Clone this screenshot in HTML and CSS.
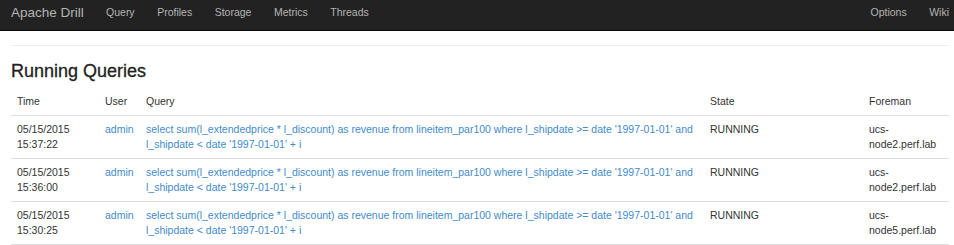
FILE: index.html
```html
<!DOCTYPE html>
<html lang="en">
<head>
    <meta charset="UTF-8">
    <meta name="viewport" content="width=device-width, initial-scale=1.0">
    <link rel="stylesheet" href="styles.css">
    <title>Apache Drill</title>
</head>
<body>
    <div class="navbar">
        <div class="nav-left">
            <a class="brand" href="#">Apache Drill</a>
            <a class="nav-link" href="#">Query</a>
            <a class="nav-link" href="#">Profiles</a>
            <a class="nav-link" href="#">Storage</a>
            <a class="nav-link" href="#">Metrics</a>
            <a class="nav-link" href="#">Threads</a>
        </div>
        <div class="nav-right">
            <a class="nav-link" href="#">Options</a>
            <a class="nav-link" href="#">Wiki</a>
        </div>
    </div>

    <div class="container">
        <hr>
        <h3>Running Queries</h3>
        <table class="table">
            <colgroup>
                <col class="col-time">
                <col class="col-user">
                <col class="col-query">
                <col class="col-state">
                <col class="col-foreman">
            </colgroup>
            <thead>
                <tr>
                    <th>Time</th>
                    <th>User</th>
                    <th>Query</th>
                    <th>State</th>
                    <th>Foreman</th>
                </tr>
            </thead>
            <tbody>
                <tr>
                    <td>05/15/2015 15:37:22</td>
                    <td><a href="#">admin</a></td>
                    <td><a href="#">select sum(l_extendedprice * l_discount) as revenue from lineitem_par100 where l_shipdate &gt;= date '1997-01-01' and l_shipdate &lt; date '1997-01-01' + i</a></td>
                    <td>RUNNING</td>
                    <td>ucs-node2.perf.lab</td>
                </tr>
                <tr>
                    <td>05/15/2015 15:36:00</td>
                    <td><a href="#">admin</a></td>
                    <td><a href="#">select sum(l_extendedprice * l_discount) as revenue from lineitem_par100 where l_shipdate &gt;= date '1997-01-01' and l_shipdate &lt; date '1997-01-01' + i</a></td>
                    <td>RUNNING</td>
                    <td>ucs-node2.perf.lab</td>
                </tr>
                <tr>
                    <td>05/15/2015 15:30:25</td>
                    <td><a href="#">admin</a></td>
                    <td><a href="#">select sum(l_extendedprice * l_discount) as revenue from lineitem_par100 where l_shipdate &gt;= date '1997-01-01' and l_shipdate &lt; date '1997-01-01' + i</a></td>
                    <td>RUNNING</td>
                    <td>ucs-node5.perf.lab</td>
                </tr>
            </tbody>
        </table>
    </div>
</body>
</html>
```

FILE: styles.css
```css
body {
    font-family: 'Liberation Sans', Arial, sans-serif;
    font-size: 10.5px;
    line-height: 15px;
    color: #333;
    margin: 0;
    background: #fff;
}

a {
    color: #428bca;
    text-decoration: none;
}

/* top bar */
.navbar {
    display: flex;
    justify-content: space-between;
    height: 30px;
    background-color: #222;
    border-bottom: 1px solid #080808;
}

.nav-left,
.nav-right {
    display: flex;
    align-items: flex-start;
}

.brand {
    color: #b4b4b4;
    font-size: 13.5px;
    line-height: 19px;
    padding: 3px 11px 0 11px;
}

.nav-link {
    color: #b4b4b4;
    padding: 5px 11.25px 0 11.25px;
}

.nav-right .nav-link:last-child {
    padding-right: 5px;
}

/* page */
.container {
    padding: 0 5px 0 11px;
}

hr {
    margin: 14px 0 0 0;
    border: 0;
    border-top: 1px solid #eee;
}

h3 {
    font-size: 18px;
    font-weight: normal;
    line-height: 1.1;
    color: #222;
    -webkit-text-stroke: 0.3px #222; /* medium weight like the original */
    margin: 16px 0 6px 0;
}

.table {
    width: 100%;
    table-layout: fixed;
    border-collapse: collapse;
    border-bottom: 1px solid #ddd;
}

.col-time { width: 88px; }
.col-user { width: 41px; }
.col-query { width: 564px; }
.col-state { width: 159px; }
.col-foreman { width: 86px; }

.table th,
.table td {
    text-align: left;
    vertical-align: top;
    padding: 6px;
    font-weight: normal;
}

.table th {
    border-bottom: 1px solid #ddd;
}

.table td {
    border-top: 1px solid #ddd;
}

.table tbody tr:first-child td {
    border-top: 0;
}
```
